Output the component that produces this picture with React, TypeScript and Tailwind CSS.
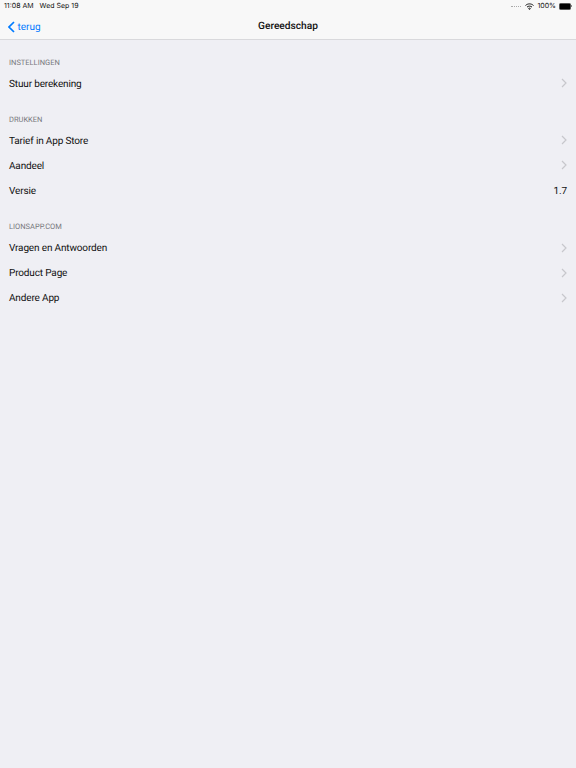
const inter = "font-['Inter','Liberation_Sans',sans-serif]";
const roboto = "font-['Roboto','Liberation_Sans',sans-serif]";

function Chevron() {
  return (
    <svg width="6" height="10" viewBox="0 0 6 10" fill="none" className="mb-[1.5px] shrink-0">
      <path d="M1 1l4 4-4 4" stroke="#c7c7cc" strokeWidth="1.2" />
    </svg>
  );
}

function Row({ label, value }: { label: string; value?: string }) {
  return (
    <div className="flex h-[25px] items-center justify-between px-[9px] text-[10px] tracking-[-0.15px] text-[#111]">
      <span>{label}</span>
      {value ? <span>{value}</span> : <Chevron />}
    </div>
  );
}

function Section({ title, children }: { title: string; children: React.ReactNode }) {
  return (
    <section className="mb-[0.5px]">
      <div className="flex h-[31.6px] items-end pb-[3.5px] pl-[9px] text-[7.5px] text-[#77777c]">{title}</div>
      {children}
    </section>
  );
}

export default function App() {
  return (
    <div className={`min-h-[768px] w-full bg-[#efeff4] [text-rendering:geometricPrecision] ${roboto}`}>
      <header className="h-[40px] border-b border-[#d9d9dc] bg-[#f8f8f8]">
        <div className={`flex h-[12px] items-center justify-between px-[4px] text-[7px] text-[#111] ${inter}`}>
          <div className="flex gap-[6px]">
            <span>11:08 AM</span>
            <span>Wed Sep 19</span>
          </div>
          <div className="flex items-center gap-[3px]">
            <span className="mr-[1px] h-[1px] w-[10px] border-b border-dotted border-[#aaa]" />
            <svg width="9" height="7" viewBox="0 0 18 14" fill="none" stroke="#111" strokeWidth="2">
              <path d="M1 5C5.5.7 12.5.7 17 5" />
              <path d="M4 8.2C6.8 5.6 11.2 5.6 14 8.2" />
              <path d="M6.8 11C8 9.9 10 9.9 11.2 11" />
              <path d="M9 14l-2-2.5h4z" fill="#111" stroke="none" />
            </svg>
            <span>100%</span>
            <div className="flex items-center">
              <div className="h-[7px] w-[12px] rounded-[1.5px] border-[0.5px] border-[#555] bg-black" />
              <div className="h-[2px] w-[1px] bg-[#888]" />
            </div>
          </div>
        </div>
        <div className="relative flex h-[28px] items-center justify-center pt-[2px]">
          <div className="absolute left-[8px] flex items-center gap-[2.5px] text-[10px] text-[#007aff]">
            <svg width="7" height="12" viewBox="0 0 7 12" fill="none">
              <path d="M6 1L1 6l5 5" stroke="#007aff" strokeWidth="1.7" />
            </svg>
            <span>terug</span>
          </div>
          <span className="text-[10.2px] font-medium text-[#111]">Gereedschap</span>
        </div>
      </header>
      <Section title="INSTELLINGEN">
        <Row label="Stuur berekening" />
      </Section>
      <Section title="DRUKKEN">
        <Row label="Tarief in App Store" />
        <Row label="Aandeel" />
        <Row label="Versie" value="1.7" />
      </Section>
      <Section title="LIONSAPP.COM">
        <Row label="Vragen en Antwoorden" />
        <Row label="Product Page" />
        <Row label="Andere App" />
      </Section>
    </div>
  );
}
